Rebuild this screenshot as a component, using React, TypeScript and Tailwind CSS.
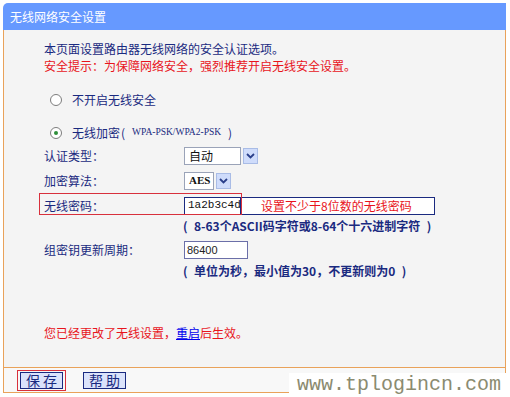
const Chevron = () => (
  <svg width="9" height="6" viewBox="0 0 9 6">
    <path d="M1 1 L4.5 4.5 L8 1" fill="none" stroke="#2a3f8a" strokeWidth="1.8" />
  </svg>
);

const Select = ({ value, boxClass }: { value: string; boxClass: string }) => (
  <div className="flex h-[18px] items-center">
    <div
      className={`flex h-[18px] items-center border border-[#9aa3b8] bg-white pl-[4px] text-[#111] ${boxClass}`}
    >
      {value}
    </div>
    <div className="ml-[2px] flex h-[16px] w-[15px] items-center justify-center border border-[#a9bce6] bg-[#cfdcfb]">
      <Chevron />
    </div>
  </div>
);

const Radio = ({ checked }: { checked?: boolean }) => (
  <span className="flex h-[12px] w-[12px] items-center justify-center rounded-full border border-[#7d7d7d] bg-white">
    {checked && <span className="h-[4px] w-[4px] rounded-full bg-[#2f8f3a]" />}
  </span>
);

// full-width brackets as the old SimSun page draws them: open one at the left of its cell, close one at the right
const Open = () => <span className="inline-block w-[12px] pl-[1px] text-left">(</span>;
const Close = () => <span className="inline-block w-[12px] pr-[1px] text-right">)</span>;

export default function App() {
  return (
    <div className="relative h-[397px] w-[510px] overflow-hidden bg-white font-['Noto_Sans_CJK_SC',sans-serif] text-[12px] leading-none text-[#1a2a80]">
      <div className="ml-[3px] pt-[3px] w-[503px]">
        {/* title bar */}
        <div className="flex h-[27px] items-center rounded-tl-[5px] bg-[#6699ff] pl-[7px] text-white">
          无线网络安全设置
        </div>

        {/* content */}
        <div className="h-[338px] border-x border-b border-[#e9a25a] bg-[#f4f4f4] pl-[40px] pt-[10px]">
          <div className="flex h-[17px] items-center">本页面设置路由器无线网络的安全认证选项。</div>
          <div className="flex h-[17px] items-center text-[#e8141c]">
            安全提示：为保障网络安全，强烈推荐开启无线安全设置。
          </div>

          <div className="mt-[16px] flex h-[20px] items-center gap-[10px] pl-[6px]">
            <Radio />
            <span>不开启无线安全</span>
          </div>
          <div className="mt-[13px] flex h-[20px] items-center gap-[10px] pl-[6px]">
            <Radio checked />
            <span className="flex items-center">
              <span>无线加密</span>
              <Open />
              <span className="font-['Liberation_Serif',serif] text-[9.5px]">WPA-PSK/WPA2-PSK</span>
              <Close />
            </span>
          </div>

          <div className="flex h-[25px] items-center">
            <span className="w-[140px]">认证类型：</span>
            <Select value="自动" boxClass="w-[57px]" />
          </div>
          <div className="flex h-[25px] items-center">
            <span className="w-[140px]">加密算法：</span>
            <Select value="AES" boxClass="w-[30px] font-['Liberation_Serif',serif] text-[11px] font-bold" />
          </div>

          <div className="relative flex h-[25px] items-center">
            <div className="absolute left-[-5px] top-0 h-[22px] w-[203px] border border-[#d8303c]" />
            <span className="w-[140px]">无线密码：</span>
            <div className="flex h-[18px] w-[57px] items-center border border-[#1a2a80] bg-white pl-[3px] font-['Liberation_Mono',monospace] text-[11px] text-[#111]">
              1a2b3c4d
            </div>
            <div className="flex h-[18px] w-[194px] items-center border border-l-0 border-[#1a2a80] bg-white pl-[20px] text-[#e8141c]">
              设置不少于8位数的无线密码
            </div>
          </div>
          <div className="flex h-[16px] items-center pl-[138px] font-bold">
            <Open />
            <span>8-63个ASCII码字符或8-64个十六进制字符</span>
            <Close />
          </div>

          <div className="mt-[6px] flex h-[20px] items-center">
            <span className="w-[140px]">组密钥更新周期：</span>
            <div className="flex h-[18px] w-[64px] items-center border border-[#6b6fa8] bg-white pl-[2px] font-['Liberation_Sans',sans-serif] text-[11px] text-[#222]">
              86400
            </div>
          </div>
          <div className="mt-[3px] flex h-[16px] items-center pl-[138px] font-bold">
            <Open />
            <span>单位为秒，最小值为30，不更新则为0</span>
            <Close />
          </div>

          <div className="mt-[46px] flex h-[16px] items-center text-[#e8141c]">
            您已经更改了无线设置，
            <span className="text-[#0000ee] underline">重启</span>
            后生效。
          </div>
        </div>

        {/* buttons */}
        <div className="flex h-[25px] items-center border-x border-b border-[#e9a25a] bg-[#f8f8f8] pl-[13px]">
          <div className="border border-[#d8303c] px-[2px] py-[1px]">
            <button className="flex h-[17px] w-[43px] items-center justify-center whitespace-pre border border-[#1a2a80] bg-[#dbe3fb] text-[14px] text-[#1a2a80]">
              保 存
            </button>
          </div>
          <button className="ml-[17px] flex h-[17px] w-[43px] items-center justify-center whitespace-pre border border-[#1a2a80] bg-[#dbe3fb] text-[14px] text-[#1a2a80]">
            帮 助
          </button>
        </div>
      </div>

      {/* watermark */}
      <div className="absolute left-[289px] top-[373px] flex h-[24px] w-[221px] items-center bg-white pl-[8px] font-['Liberation_Mono',monospace] text-[20px] text-[#8b8b70]">
        www.tplogincn.com
      </div>
    </div>
  );
}
